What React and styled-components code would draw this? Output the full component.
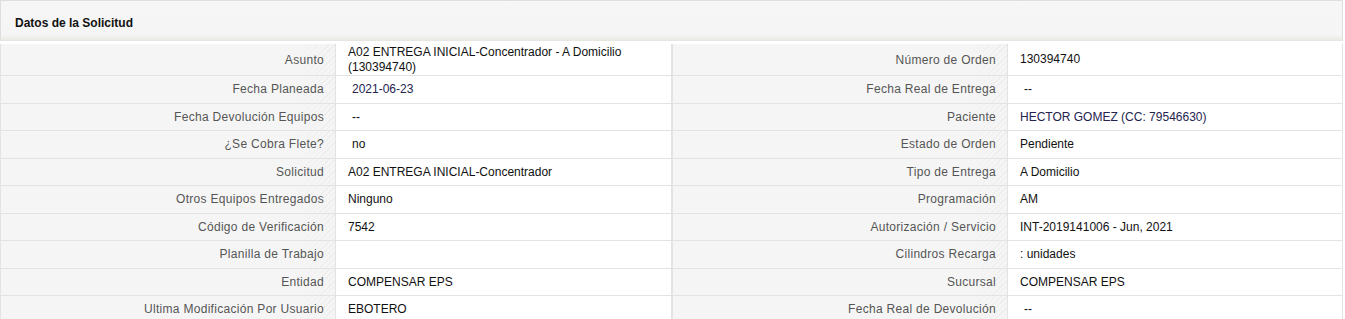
import React from 'react'
import styled, { createGlobalStyle } from 'styled-components'

const GlobalStyle = createGlobalStyle`
    body {
        margin: 0;
        background: #ffffff;
        font-family: "Liberation Sans", Arial, sans-serif;
    }
`

// filas de la solicitud: [etiqueta, valor, opciones] x2
const rows = [
    [
        { label: 'Asunto', value: ['A02 ENTREGA INICIAL-Concentrador - A Domicilio', '(130394740)'] },
        { label: 'Número de Orden', value: '130394740' },
    ],
    [
        { label: 'Fecha Planeada', value: '2021-06-23', indent: true, navy: true },
        { label: 'Fecha Real de Entrega', value: '--', indent: true },
    ],
    [
        { label: 'Fecha Devolución Equipos', value: '--', indent: true },
        { label: 'Paciente', value: 'HECTOR GOMEZ (CC: 79546630)', navy: true },
    ],
    [
        { label: '¿Se Cobra Flete?', value: 'no', indent: true },
        { label: 'Estado de Orden', value: 'Pendiente' },
    ],
    [
        { label: 'Solicitud', value: 'A02 ENTREGA INICIAL-Concentrador' },
        { label: 'Tipo de Entrega', value: 'A Domicilio' },
    ],
    [
        { label: 'Otros Equipos Entregados', value: 'Ninguno' },
        { label: 'Programación', value: 'AM' },
    ],
    [
        { label: 'Código de Verificación', value: '7542' },
        { label: 'Autorización / Servicio', value: 'INT-2019141006 - Jun, 2021' },
    ],
    [
        { label: 'Planilla de Trabajo', value: '' },
        { label: 'Cilindros Recarga', value: ': unidades' },
    ],
    [
        { label: 'Entidad', value: 'COMPENSAR EPS' },
        { label: 'Sucursal', value: 'COMPENSAR EPS' },
    ],
    [
        { label: 'Ultima Modificación Por Usuario', value: 'EBOTERO' },
        { label: 'Fecha Real de Devolución', value: '--', indent: true },
    ],
]

export default function App() {
    return (
        <>
            <GlobalStyle />
            <Panel>
                <PanelHeader>
                    <PanelTitle>Datos de la Solicitud</PanelTitle>
                </PanelHeader>
                <Table>
                    {rows.map((row, i) => (
                        <Row key={i} $tall={Array.isArray(row[0].value)}>
                            {row.map((cell, j) => (
                                <React.Fragment key={j}>
                                    <LabelCell>{cell.label}</LabelCell>
                                    <ValueCell $indent={cell.indent} $navy={cell.navy} $divider={j === 0}>
                                        {Array.isArray(cell.value)
                                            ? cell.value.map((line) => <div key={line}>{line}</div>)
                                            : cell.value}
                                    </ValueCell>
                                </React.Fragment>
                            ))}
                        </Row>
                    ))}
                </Table>
            </Panel>
        </>
    )
}

const Panel = styled.div`
    width: 1343px;
    box-sizing: border-box;
`

const PanelHeader = styled.div`
    height: 41px;
    box-sizing: border-box;
    border: 1px solid #dedede;
    border-bottom: none;
    background: linear-gradient(to bottom, #f6f6f6 0, #f5f5f5 34px, #ecece8 38px, #e2e2dc 41px);
    display: flex;
    align-items: center;
    padding-left: 14px;
    padding-top: 3px;
    margin-bottom: 3px;
`

const PanelTitle = styled.h3`
    margin: 0;
    font-size: 12px;
    font-weight: bold;
    color: #111;
`

const Table = styled.div`
    border-left: 1px solid #e3e3e3;
`

const Row = styled.div`
    display: grid;
    grid-template-columns: 335px 337px 335px 335px;
    height: ${(p) => (p.$tall ? '32px' : '27.5px')};
    border-bottom: 1px solid #e3e3e3;
    box-sizing: border-box;
    font-size: 12px;
`

const LabelCell = styled.div`
    position: relative;
    display: flex;
    align-items: center;
    justify-content: flex-end;
    padding-right: 11px;
    background: #f5f5f5;
    color: #555;
    letter-spacing: 0.3px;
    border-right: 1px solid #e3e3e3;
    white-space: nowrap;

    &::after {
        content: "";
        position: absolute;
        top: 0;
        right: 0;
        bottom: 0;
        width: 40px;
        background: repeating-linear-gradient(135deg, rgba(0, 0, 0, 0.035) 0 1px, transparent 1px 4px);
        -webkit-mask-image: linear-gradient(to right, transparent, #000);
        mask-image: linear-gradient(to right, transparent, #000);
    }
`

const ValueCell = styled.div`
    display: flex;
    flex-direction: column;
    justify-content: center;
    padding-left: ${(p) => (p.$indent ? '16px' : '12px')};
    background: #fff;
    color: ${(p) => (p.$navy ? '#24244f' : '#111')};
    line-height: 14.5px;
    border-right: ${(p) => (p.$divider ? '2px solid #e3e3e3' : '1px solid #e3e3e3')};
    white-space: nowrap;
`
